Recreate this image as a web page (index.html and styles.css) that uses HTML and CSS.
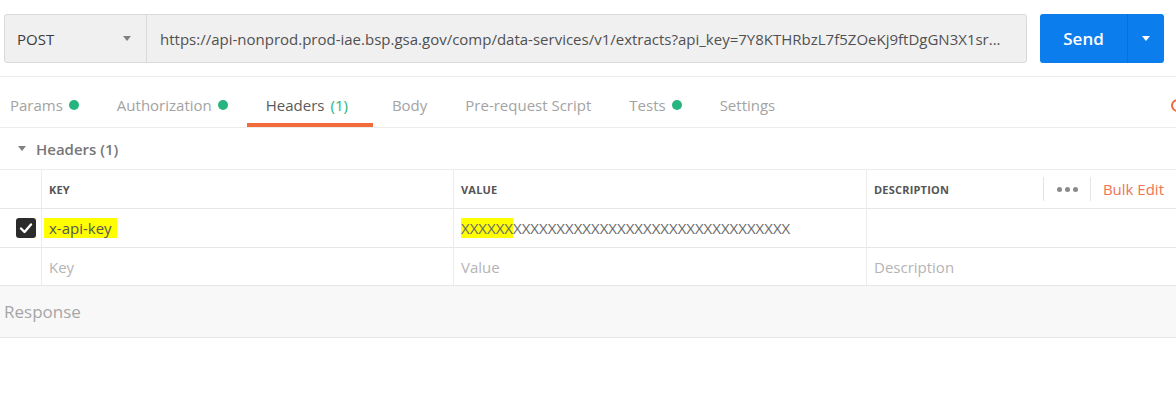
FILE: index.html
```html
<!DOCTYPE html>
<html lang="en">
<head>
<meta charset="utf-8">
<title>Postman request</title>
<link rel="stylesheet" href="styles.css">
</head>
<body>
<div class="page">
  <div class="request-bar">
    <div class="url-group">
      <div class="method">
        <span class="method-name">POST</span>
        <span class="caret"></span>
      </div>
      <div class="url">https://api-nonprod.prod-iae.bsp.gsa.gov/comp/data-services/v1/extracts?api_key=7Y8KTHRbzL7f5ZOeKj9ftDgGN3X1sr...</div>
    </div>
    <div class="send">
      <span class="send-main">Send</span>
      <span class="send-drop"><span class="caret caret-white"></span></span>
    </div>
  </div>

  <div class="tabs">
    <div class="tab tab-first">Params <span class="dot"></span></div>
    <div class="tab">Authorization <span class="dot"></span></div>
    <div class="tab active">Headers <span class="count">(1)</span></div>
    <div class="tab">Body</div>
    <div class="tab">Pre-request Script</div>
    <div class="tab">Tests <span class="dot"></span></div>
    <div class="tab">Settings</div>
    <div class="tab-links"><span class="ring"></span></div>
  </div>

  <div class="section-title">
    <span class="toggle"></span>
    <span>Headers (1)</span>
  </div>

  <div class="kv-table">
    <div class="cell cell-check head"></div>
    <div class="cell head">KEY</div>
    <div class="cell head">VALUE</div>
    <div class="cell head head-desc">
      <span>DESCRIPTION</span>
      <span class="head-actions">
        <span class="sep"></span>
        <span class="dots"><i></i><i></i><i></i></span>
        <span class="sep"></span>
        <span class="bulk">Bulk Edit</span>
      </span>
    </div>

    <div class="cell cell-check"><span class="checkbox"><svg viewBox="0 0 20 20" width="20" height="20"><path d="M5 10.5 L8.5 14 L15 6.5" fill="none" stroke="#fff" stroke-width="2.4" stroke-linecap="round" stroke-linejoin="round"/></svg></span></div>
    <div class="cell"><span class="hl key-hl">x-api-key</span></div>
    <div class="cell"><span class="xs"><span class="hl">XXXXXX</span>XXXXXXXXXXXXXXXXXXXXXXXXXXXXXXXX</span></div>
    <div class="cell"></div>

    <div class="cell cell-check"></div>
    <div class="cell placeholder">Key</div>
    <div class="cell placeholder">Value</div>
    <div class="cell placeholder">Description</div>
  </div>

  <div class="response">Response</div>
</div>
</body>
</html>
```

FILE: styles.css
```css
html, body {
  margin: 0;
  padding: 0;
  background: #fff;
  overflow: hidden;
}
body {
  font-family: "Open Sans", "Noto Sans", sans-serif;
  color: #505050;
  width: 1176px;
}
.page {
  width: 1176px;
  overflow: hidden;
}

/* request bar */
.request-bar {
  display: flex;
  gap: 13px;
  padding: 14px 12px 13px 4px;
  border-bottom: 1px solid #ececec;
}
.url-group {
  flex: 1;
  display: flex;
  height: 47px;
  border: 1px solid #d9d9d9;
  border-radius: 3px;
  background: #f0f0f0;
}
.method {
  width: 142px;
  flex: none;
  display: flex;
  align-items: center;
  justify-content: space-between;
  padding: 0 15px 0 12px;
  box-sizing: border-box;
  border-right: 1px solid #d9d9d9;
  font-size: 15px;
  color: #3c3c3c;
}
.caret {
  width: 0;
  height: 0;
  border-left: 4px solid transparent;
  border-right: 4px solid transparent;
  border-top: 5px solid #808080;
}
.caret-white { border-top-color: #fff; }
.url {
  flex: 1;
  display: flex;
  align-items: center;
  padding-left: 13px;
  font-size: 15px;
  color: #505050;
  white-space: nowrap;
  overflow: hidden;
}
.send {
  width: 124px;
  height: 49px;
  flex: none;
  display: flex;
  background: #0b7ded;
  border-radius: 3px;
  color: #fff;
}
.send-main {
  width: 87px;
  display: flex;
  align-items: center;
  justify-content: center;
  font-size: 17px;
  font-weight: 600;
  border-right: 1px solid #0a6fd6;
}
.send-drop {
  flex: 1;
  display: flex;
  align-items: center;
  justify-content: center;
}

/* tabs */
.tabs {
  display: flex;
  height: 50px;
  border-bottom: 1px solid #ececec;
  padding-left: 10px;
}
.tab {
  display: flex;
  align-items: center;
  gap: 6px;
  padding: 9px 19px 0;
  font-size: 15px;
  color: #a3a3a3;
  white-space: nowrap;
  border-bottom: 4px solid transparent;
}
.tab-first { padding-left: 0; }
.tab.active {
  color: #5a5a5a;
  padding-right: 25px;
  border-bottom-color: #f26b3a;
}
.count { color: #26b47f; }
.dot {
  width: 10px;
  height: 10px;
  border-radius: 50%;
  background: #26b47f;
}
.tab-links {
  margin-left: auto;
  margin-right: -8px;
  display: flex;
  align-items: center;
  padding-top: 7px;
}
.ring {
  width: 9px;
  height: 9px;
  border: 2px solid #f26b3a;
  border-radius: 50%;
}

/* section title */
.section-title {
  height: 41px;
  display: flex;
  align-items: center;
  gap: 10px;
  padding-left: 18px;
  font-size: 15px;
  font-weight: 600;
  color: #777;
}
.toggle {
  width: 0;
  height: 0;
  border-left: 4px solid transparent;
  border-right: 4px solid transparent;
  border-top: 5px solid #808080;
}

/* table */
.kv-table {
  display: grid;
  grid-template-columns: 41px 412px 413px 1fr;
  grid-template-rows: 39px 39px 38px;
  border-top: 1px solid #ececec;
}
.cell {
  display: flex;
  align-items: center;
  border-bottom: 1px solid #e6e6e6;
  border-left: 1px solid #ececec;
  padding-left: 7px;
  font-size: 15px;
  color: #505050;
  white-space: nowrap;
}
.cell-check {
  border-left: none;
  padding-left: 16px;
}
.head {
  font-size: 11px;
  font-weight: 700;
  color: #555;
  letter-spacing: 0.2px;
}
.head-desc {
  justify-content: space-between;
}
.head-actions {
  display: flex;
  align-items: center;
  height: 100%;
}
.sep {
  width: 1px;
  height: 24px;
  background: #e4e4e4;
}
.dots {
  display: flex;
  gap: 3px;
  padding: 0 12px 0 13px;
}
.dots i {
  width: 5px;
  height: 5px;
  border-radius: 50%;
  background: #8a8a8a;
}
.bulk {
  color: #f07352;
  font-size: 15px;
  font-weight: 400;
  letter-spacing: 0;
  padding: 0 12px 0 12px;
}
.checkbox {
  width: 20px;
  height: 20px;
  border-radius: 3px;
  background: #2b2b2b;
  display: flex;
}
.hl {
  background: #ffff00;
}
.key-hl {
  padding: 0 5px;
  line-height: 20px;
  margin-left: -5px;
  color: #555;
}
.xs {
  letter-spacing: 0;
  color: #6a6a6a;
}
.placeholder {
  color: #b4b4b4;
}

/* response */
.response {
  height: 51px;
  display: flex;
  align-items: center;
  padding-left: 4px;
  background: #f8f8f8;
  border-bottom: 1px solid #e6e6e6;
  font-size: 17px;
  color: #a6a6a6;
}
```
